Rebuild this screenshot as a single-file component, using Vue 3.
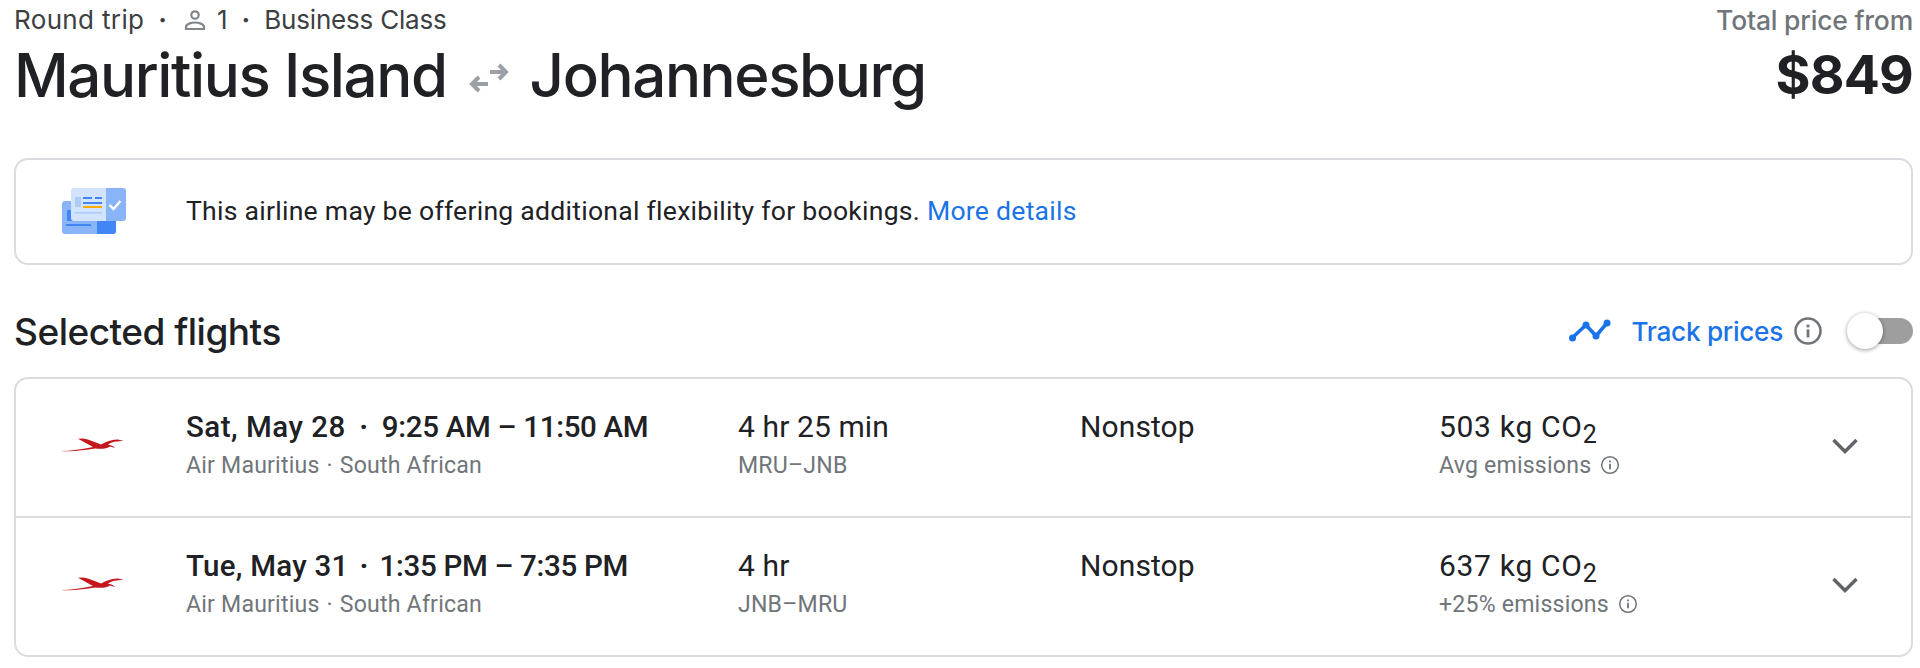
<script setup>
const flights = [
  { date: 'Sat, May 28', time: '9:25 AM – 11:50 AM', dur: '4 hr 25 min', route: 'MRU–JNB', co2: '503 kg CO', em: 'Avg emissions' },
  { date: 'Tue, May 31', time: '1:35 PM – 7:35 PM', dur: '4 hr', route: 'JNB–MRU', co2: '637 kg CO', em: '+25% emissions' },
]
</script>

<template>
  <div class="page">
    <header class="head">
      <div>
        <div class="meta">
          <span class="trip">Round trip</span><span class="dot first">·</span>
          <svg class="person" viewBox="0 0 22 20" width="22" height="20"><circle cx="11" cy="5" r="3.700" fill="none" stroke="#80868b" stroke-width="2.200"/><path d="M2 19v-2c0-3 5.500-4.500 9-4.500s9 1.500 9 4.500v2z" fill="none" stroke="#80868b" stroke-width="2.200"/></svg>
          <span class="one">1</span><span class="dot">·</span><span class="cabin">Business Class</span>
        </div>
        <h1 class="title">
          <span>Mauritius Island</span>
          <svg class="swap" viewBox="0 0 40 30" width="40" height="30"><path d="M21 9H37M30 2l7 7-7 7M19 21H3M10 14l-7 7 7 7" fill="none" stroke="#9aa0a6" stroke-width="4"/></svg>
          <span>Johannesburg</span>
        </h1>
      </div>
      <div class="price">
        <div class="from">Total price from</div>
        <div class="amount">$849</div>
      </div>
    </header>

    <section class="banner">
      <svg class="ticket" viewBox="0 0 64 48" width="64" height="48">
        <rect x="0" y="13" width="54" height="33" rx="3" fill="#8ab4f8"/>
        <path d="M35 13h16a3 3 0 0 1 3 3v27a3 3 0 0 1-3 3H35z" fill="#4285f4"/>
        <rect x="5" y="22" width="6" height="11" fill="#4285f4"/>
        <rect x="4" y="36" width="25" height="2" fill="#4285f4"/>
        <path d="M44 0h17a3 3 0 0 1 3 3v27a3 3 0 0 1-3 3H44z" fill="#8ab4f8"/>
        <path d="M12 0h32v33H12a3 3 0 0 1-3-3V3a3 3 0 0 1 3-3z" fill="#d2e3fc"/>
        <rect x="13" y="9" width="6" height="10" fill="#aecbfa"/>
        <rect x="21" y="9" width="9" height="2" fill="#4285f4"/>
        <rect x="33" y="9" width="7" height="2" fill="#4285f4"/>
        <rect x="21" y="14" width="19" height="2" fill="#4285f4"/>
        <rect x="21" y="18" width="19" height="2" fill="#f9ab00"/>
        <rect x="13" y="24" width="27" height="1.600" fill="#aecbfa"/>
        <path d="M47.500 17l4 4 7-8" fill="none" stroke="#fff" stroke-width="2.400"/>
      </svg>
      <p class="notice">This airline may be offering additional flexibility for bookings. <a class="more">More details</a></p>
    </section>

    <div class="sel">
      <h2 class="sel-title">Selected flights</h2>
      <div class="track">
        <svg viewBox="0 0 42 24" width="42" height="24"><path d="M3 19L17 6l10 11L38 4" fill="none" stroke="#1a73e8" stroke-width="3.600"/><circle cx="3.500" cy="19" r="3.500" fill="#1a73e8"/><circle cx="17" cy="6" r="3.500" fill="#1a73e8"/><circle cx="27" cy="17" r="3.500" fill="#1a73e8"/><circle cx="38" cy="4" r="3.500" fill="#1a73e8"/></svg>
        <span class="track-label">Track prices</span>
        <svg class="info-lg" viewBox="0 0 28 28" width="28" height="28"><circle cx="14" cy="14" r="12.500" fill="none" stroke="#70757a" stroke-width="2.600"/><rect x="12.600" y="12.400" width="2.800" height="8" fill="#70757a"/><rect x="12.600" y="7.600" width="2.800" height="2.800" fill="#70757a"/></svg>
        <div class="toggle"><span class="knob"></span></div>
      </div>
    </div>

    <section class="card">
      <div v-for="f in flights" :key="f.date" class="row">
        <svg class="bird" viewBox="0 0 64 14" width="64" height="14"><path d="M0 13C10 13 22 11 32 9L17 .8l5-.3C27 1 33 4 40 6.500 46 3 52 1.500 57 1.500L63 3C56 3 50 4 47 6.500 49 7 52 7.500 54 10L49 8.500C46 11 40 11 34 10.500 24 12 10 14 0 13Z" fill="#c5161d"/></svg>
        <div class="col-main">
          <div class="big strong"><span class="date">{{ f.date }}</span><span class="sep">·</span><span class="time">{{ f.time }}</span></div>
          <div class="small">Air Mauritius<span class="sep2">·</span>South African</div>
        </div>
        <div class="col-dur">
          <div class="big">{{ f.dur }}</div>
          <div class="small">{{ f.route }}</div>
        </div>
        <div class="col-stop">
          <div class="big">Nonstop</div>
        </div>
        <div class="col-em">
          <div class="big co2">{{ f.co2 }}<sub>2</sub></div>
          <div class="small">{{ f.em }}
            <svg class="info-sm" viewBox="0 0 20 20" width="20" height="20"><circle cx="10" cy="10" r="8.300" fill="none" stroke="#70757a" stroke-width="1.500"/><rect x="9.100" y="8.800" width="1.800" height="5.500" fill="#70757a"/><rect x="9.100" y="5.500" width="1.800" height="1.900" fill="#70757a"/></svg>
          </div>
        </div>
        <svg class="chev" viewBox="0 0 28 18" width="28" height="18"><path d="M2.500 3l11.500 11.500L25.500 3" fill="none" stroke="#5f6368" stroke-width="3.400"/></svg>
      </div>
    </section>
  </div>
</template>

<style>
html, body { margin: 0; background: #fff; }
</style>

<style scoped>
.page {
  width: 1920px;
  height: 668px;
  box-sizing: border-box;
  padding: 0 7px 0 14px;
  overflow: hidden;
  font-family: Roboto, "Liberation Sans", sans-serif;
  color: #202124;
}
.head { display: flex; justify-content: space-between; align-items: flex-start; height: 158px; }
.meta { display: flex; align-items: center; height: 39px; margin-bottom: 1px; color: #3c4043; font-family: Inter, Roboto, sans-serif; font-size: 26px; }
.trip { letter-spacing: 0.350px; }
.cabin { letter-spacing: -0.200px; }
.dot { margin: 0 14px; font-weight: 700; }
.dot.first { margin-right: 17px; }
.person { margin-right: 11px; }
.title { display: flex; align-items: center; margin: 0; height: 70px; font-family: Inter, Roboto, sans-serif; font-size: 60px; font-weight: 500; letter-spacing: -1.400px; color: #202124; }
.swap { margin: 6px 21px 0 22px; }
.price { text-align: right; }
.from { height: 40px; line-height: 40px; font-family: Inter, Roboto, sans-serif; font-size: 26.500px; font-weight: 500; color: #70757a; letter-spacing: -0.200px; }
.amount { height: 70px; line-height: 70px; font-family: Inter, Roboto, sans-serif; font-size: 53.500px; font-weight: 700; letter-spacing: -0.800px; color: #202124; }

.banner { display: flex; align-items: center; height: 107px; box-sizing: border-box; border: 2px solid #dadce0; border-radius: 14px; padding: 0 0 2px 46px; }
.ticket { margin: 2px 60px 0 0; }
.notice { margin: 0; font-size: 26.600px; letter-spacing: 0.250px; color: #202124; }
.more { color: #1a73e8; }

.sel { display: flex; justify-content: space-between; align-items: center; height: 112px; box-sizing: border-box; padding-top: 20px; }
.sel-title { margin: 0; font-family: Inter, Roboto, sans-serif; font-size: 37px; font-weight: 500; letter-spacing: -0.500px; color: #202124; }
.track { display: flex; align-items: center; }
.track-label { margin: 0 11px 0 21px; font-family: Inter, Roboto, sans-serif; font-size: 26.200px; font-weight: 500; color: #1a73e8; letter-spacing: -0.300px; }
.toggle { position: relative; width: 58px; height: 26px; margin-left: 33px; background: #9e9e9e; border-radius: 13px; }
.knob { position: absolute; left: -8px; top: -5px; width: 36px; height: 36px; border-radius: 50%; background: #fff; box-shadow: 0 1px 4px rgba(0,0,0,.4); }

.card { height: 280px; box-sizing: border-box; border: 2px solid #dadce0; border-radius: 14px; }
.row { position: relative; display: grid; grid-template-columns: 170px 552px 342px 359px 1fr; height: 137px; box-sizing: border-box; padding-top: 30px; }
.row + .row { border-top: 2px solid #dadce0; height: 141px; }
.bird { margin: 29px 0 0 45px; }
.big { height: 36px; line-height: 36px; font-size: 30px; letter-spacing: 0.100px; color: #202124; white-space: nowrap; }
.big sub { font-size: 25px; line-height: 0; vertical-align: -6px; }
.co2 { letter-spacing: 0.700px; }
.strong { font-size: 29.500px; font-weight: 500; }
.date { letter-spacing: 0.500px; }
.time { letter-spacing: -0.300px; }
.sep { margin: 0 13.500px; font-weight: 700; }
.row + .row .date { letter-spacing: 0.250px; }
.row + .row .sep { margin: 0 11px; }
.sep2 { margin: 0 7px; }
.small { display: flex; align-items: center; margin-top: 7px; height: 26px; font-size: 23.100px; letter-spacing: 0.200px; color: #70757a; white-space: nowrap; }
.info-sm { margin-left: 9px; }
.chev { position: absolute; right: 52px; top: 58px; }
</style>
